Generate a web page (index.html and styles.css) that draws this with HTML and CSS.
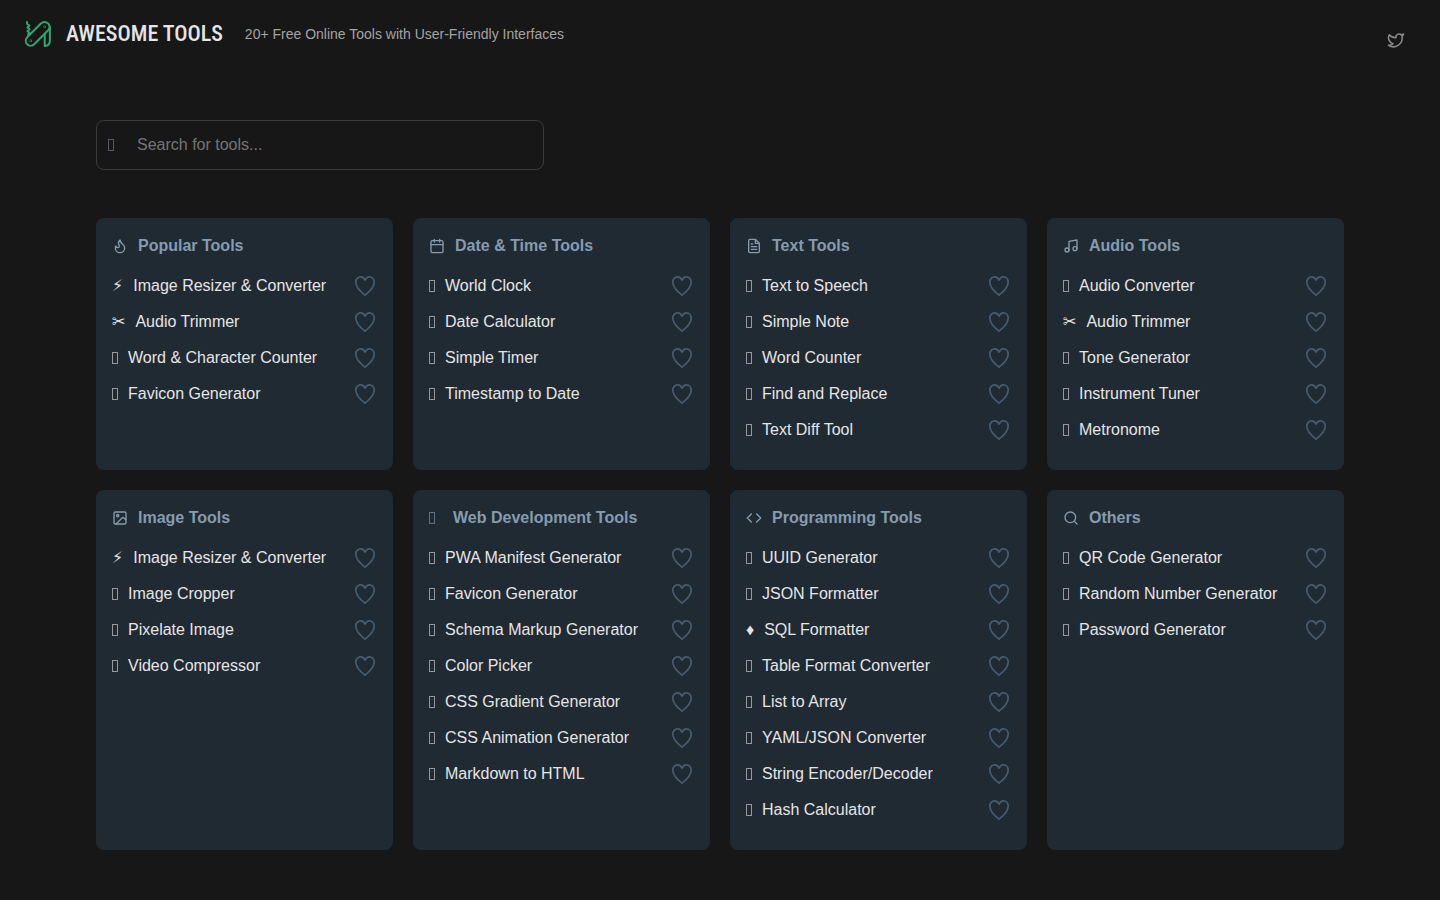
FILE: index.html
```html
<!DOCTYPE html>
<html lang="en">
<head>
    <meta charset="UTF-8">
    <meta name="viewport" content="width=device-width, initial-scale=1.0">
    <title>Awesome Tools</title>
    <link rel="stylesheet" href="styles.css">
</head>
<body>

    <!-- Shared icons -->
    <svg class="sprite" aria-hidden="true">
        <symbol id="heart" viewBox="0 0 24 24"><path d="M12 21.2C8 18 2.8 13 2.8 8.2C2.8 5 5 2.8 7.6 2.8C9.6 2.8 11.2 4.2 12 6.2C12.8 4.2 14.4 2.8 16.4 2.8C19 2.8 21.2 5 21.2 8.2C21.2 13 16 18 12 21.2Z"/></symbol>
    </svg>

    <header class="header">
        <a class="logo" href="#">
            <svg class="logo-mark" viewBox="0 0 26 26" aria-hidden="true">
                <path d="M2.2 16.2L16.2 2.2A4.9 4.9 0 0 1 23.3 2.7A4.9 4.9 0 0 1 23.2 9.2L9.2 23.2A4.9 4.9 0 0 1 2.2 16.2Z"/>
                <path d="M24.9 6V19.5C24.9 22.5 23 24.8 19.7 25.1V13.2"/>
                <path d="M2 1L2.2 3L4.4 4.6L2.4 6.4L4.6 8.2L2.4 10L4.4 11.8L3 13.6"/>
                <circle cx="5.8" cy="19.7" r=".3"/>
                <circle cx="19.7" cy="5.8" r=".3"/>
            </svg>
            <span class="logo-text">AWESOME TOOLS</span>
        </a>
        <p class="tagline">20+ Free Online Tools with User-Friendly Interfaces</p>
        <a class="twitter" href="#" aria-label="Twitter">
            <svg viewBox="0 0 24 24" aria-hidden="true"><path d="M22 4s-.7 2.1-2 3.4c1.6 10-9.4 17.3-18 11.6 2.2.1 4.4-.6 6-2C3 15.5.5 9.6 3 5c2.2 2.6 5.6 4.1 9 4-.9-4.2 4-6.6 7-3.8 1.1 0 3-1.2 3-1.2z"/></svg>
        </a>
    </header>

    <main class="content">
        <div class="search">
            <label class="search-icon" for="search-input" aria-label="Search"><span class="box"></span></label>
            <input type="text" id="search-input" class="search-input" placeholder="Search for tools...">
        </div>

        <div class="grid">
            <section class="card">
                <h2 class="card-title"><svg viewBox="0 0 24 24" aria-hidden="true"><path d="M8.5 14.5A2.5 2.5 0 0 0 11 12c0-1.38-.5-2-1-3-1.07-2.14-.22-4.05 2-6 .5 2.5 2 4.9 4 6.5 2 1.6 3 3.5 3 5.5a7 7 0 1 1-14 0c0-1.15.43-2.29 1-3a2.5 2.5 0 0 0 2.5 2.5z"/></svg>Popular Tools</h2>
                <ul class="tools">
                    <li><a href="#"><span class="symbol">⚡&#xFE0E;</span>Image Resizer &amp; Converter</a><button class="fav" aria-label="Add to favorites"><svg><use href="#heart"/></svg></button></li>
                    <li><a href="#"><span class="symbol">✂</span>Audio Trimmer</a><button class="fav" aria-label="Add to favorites"><svg><use href="#heart"/></svg></button></li>
                    <li><a href="#"><span class="box"></span>Word &amp; Character Counter</a><button class="fav" aria-label="Add to favorites"><svg><use href="#heart"/></svg></button></li>
                    <li><a href="#"><span class="box"></span>Favicon Generator</a><button class="fav" aria-label="Add to favorites"><svg><use href="#heart"/></svg></button></li>
                </ul>
            </section>

            <section class="card">
                <h2 class="card-title"><svg viewBox="0 0 24 24" aria-hidden="true"><rect x="3" y="4" width="18" height="18" rx="2"/><path d="M16 2v4M8 2v4M3 10h18"/></svg>Date &amp; Time Tools</h2>
                <ul class="tools">
                    <li><a href="#"><span class="box"></span>World Clock</a><button class="fav" aria-label="Add to favorites"><svg><use href="#heart"/></svg></button></li>
                    <li><a href="#"><span class="box"></span>Date Calculator</a><button class="fav" aria-label="Add to favorites"><svg><use href="#heart"/></svg></button></li>
                    <li><a href="#"><span class="box"></span>Simple Timer</a><button class="fav" aria-label="Add to favorites"><svg><use href="#heart"/></svg></button></li>
                    <li><a href="#"><span class="box"></span>Timestamp to Date</a><button class="fav" aria-label="Add to favorites"><svg><use href="#heart"/></svg></button></li>
                </ul>
            </section>

            <section class="card">
                <h2 class="card-title"><svg viewBox="0 0 24 24" aria-hidden="true"><path d="M14 2H6a2 2 0 0 0-2 2v16a2 2 0 0 0 2 2h12a2 2 0 0 0 2-2V8zM14 2v6h6M16 13H8M16 17H8M10 9H8"/></svg>Text Tools</h2>
                <ul class="tools">
                    <li><a href="#"><span class="box"></span>Text to Speech</a><button class="fav" aria-label="Add to favorites"><svg><use href="#heart"/></svg></button></li>
                    <li><a href="#"><span class="box"></span>Simple Note</a><button class="fav" aria-label="Add to favorites"><svg><use href="#heart"/></svg></button></li>
                    <li><a href="#"><span class="box"></span>Word Counter</a><button class="fav" aria-label="Add to favorites"><svg><use href="#heart"/></svg></button></li>
                    <li><a href="#"><span class="box"></span>Find and Replace</a><button class="fav" aria-label="Add to favorites"><svg><use href="#heart"/></svg></button></li>
                    <li><a href="#"><span class="box"></span>Text Diff Tool</a><button class="fav" aria-label="Add to favorites"><svg><use href="#heart"/></svg></button></li>
                </ul>
            </section>

            <section class="card">
                <h2 class="card-title"><svg viewBox="0 0 24 24" aria-hidden="true"><path d="M9 18V5l12-2v13"/><circle cx="6" cy="18" r="3"/><circle cx="18" cy="16" r="3"/></svg>Audio Tools</h2>
                <ul class="tools">
                    <li><a href="#"><span class="box"></span>Audio Converter</a><button class="fav" aria-label="Add to favorites"><svg><use href="#heart"/></svg></button></li>
                    <li><a href="#"><span class="symbol">✂</span>Audio Trimmer</a><button class="fav" aria-label="Add to favorites"><svg><use href="#heart"/></svg></button></li>
                    <li><a href="#"><span class="box"></span>Tone Generator</a><button class="fav" aria-label="Add to favorites"><svg><use href="#heart"/></svg></button></li>
                    <li><a href="#"><span class="box"></span>Instrument Tuner</a><button class="fav" aria-label="Add to favorites"><svg><use href="#heart"/></svg></button></li>
                    <li><a href="#"><span class="box"></span>Metronome</a><button class="fav" aria-label="Add to favorites"><svg><use href="#heart"/></svg></button></li>
                </ul>
            </section>

            <section class="card">
                <h2 class="card-title"><svg viewBox="0 0 24 24" aria-hidden="true"><rect x="3" y="3" width="18" height="18" rx="2"/><circle cx="8.5" cy="8.5" r="1.7"/><path d="M21 15l-3.1-3.1a2 2 0 0 0-2.8 0L6 21"/></svg>Image Tools</h2>
                <ul class="tools">
                    <li><a href="#"><span class="symbol">⚡&#xFE0E;</span>Image Resizer &amp; Converter</a><button class="fav" aria-label="Add to favorites"><svg><use href="#heart"/></svg></button></li>
                    <li><a href="#"><span class="box"></span>Image Cropper</a><button class="fav" aria-label="Add to favorites"><svg><use href="#heart"/></svg></button></li>
                    <li><a href="#"><span class="box"></span>Pixelate Image</a><button class="fav" aria-label="Add to favorites"><svg><use href="#heart"/></svg></button></li>
                    <li><a href="#"><span class="box"></span>Video Compressor</a><button class="fav" aria-label="Add to favorites"><svg><use href="#heart"/></svg></button></li>
                </ul>
            </section>

            <section class="card">
                <h2 class="card-title"><span class="title-icon"><span class="box"></span></span>Web Development Tools</h2>
                <ul class="tools">
                    <li><a href="#"><span class="box"></span>PWA Manifest Generator</a><button class="fav" aria-label="Add to favorites"><svg><use href="#heart"/></svg></button></li>
                    <li><a href="#"><span class="box"></span>Favicon Generator</a><button class="fav" aria-label="Add to favorites"><svg><use href="#heart"/></svg></button></li>
                    <li><a href="#"><span class="box"></span>Schema Markup Generator</a><button class="fav" aria-label="Add to favorites"><svg><use href="#heart"/></svg></button></li>
                    <li><a href="#"><span class="box"></span>Color Picker</a><button class="fav" aria-label="Add to favorites"><svg><use href="#heart"/></svg></button></li>
                    <li><a href="#"><span class="box"></span>CSS Gradient Generator</a><button class="fav" aria-label="Add to favorites"><svg><use href="#heart"/></svg></button></li>
                    <li><a href="#"><span class="box"></span>CSS Animation Generator</a><button class="fav" aria-label="Add to favorites"><svg><use href="#heart"/></svg></button></li>
                    <li><a href="#"><span class="box"></span>Markdown to HTML</a><button class="fav" aria-label="Add to favorites"><svg><use href="#heart"/></svg></button></li>
                </ul>
            </section>

            <section class="card">
                <h2 class="card-title"><svg viewBox="0 0 24 24" aria-hidden="true"><path d="M16 18l6-6-6-6M8 6l-6 6 6 6"/></svg>Programming Tools</h2>
                <ul class="tools">
                    <li><a href="#"><span class="box"></span>UUID Generator</a><button class="fav" aria-label="Add to favorites"><svg><use href="#heart"/></svg></button></li>
                    <li><a href="#"><span class="box"></span>JSON Formatter</a><button class="fav" aria-label="Add to favorites"><svg><use href="#heart"/></svg></button></li>
                    <li><a href="#"><span>♦</span>SQL Formatter</a><button class="fav" aria-label="Add to favorites"><svg><use href="#heart"/></svg></button></li>
                    <li><a href="#"><span class="box"></span>Table Format Converter</a><button class="fav" aria-label="Add to favorites"><svg><use href="#heart"/></svg></button></li>
                    <li><a href="#"><span class="box"></span>List to Array</a><button class="fav" aria-label="Add to favorites"><svg><use href="#heart"/></svg></button></li>
                    <li><a href="#"><span class="box"></span>YAML/JSON Converter</a><button class="fav" aria-label="Add to favorites"><svg><use href="#heart"/></svg></button></li>
                    <li><a href="#"><span class="box"></span>String Encoder/Decoder</a><button class="fav" aria-label="Add to favorites"><svg><use href="#heart"/></svg></button></li>
                    <li><a href="#"><span class="box"></span>Hash Calculator</a><button class="fav" aria-label="Add to favorites"><svg><use href="#heart"/></svg></button></li>
                </ul>
            </section>

            <section class="card">
                <h2 class="card-title"><svg viewBox="0 0 24 24" aria-hidden="true"><circle cx="11" cy="11" r="8"/><path d="M21 21l-4.3-4.3"/></svg>Others</h2>
                <ul class="tools">
                    <li><a href="#"><span class="box"></span>QR Code Generator</a><button class="fav" aria-label="Add to favorites"><svg><use href="#heart"/></svg></button></li>
                    <li><a href="#"><span class="box"></span>Random Number Generator</a><button class="fav" aria-label="Add to favorites"><svg><use href="#heart"/></svg></button></li>
                    <li><a href="#"><span class="box"></span>Password Generator</a><button class="fav" aria-label="Add to favorites"><svg><use href="#heart"/></svg></button></li>
                </ul>
            </section>
        </div>
    </main>

</body>
</html>
```
FILE: styles.css
```css
* {
    box-sizing: border-box;
}

body {
    font-family: "Liberation Sans", Arial, sans-serif;
    font-size: 16px;
    line-height: 24px;
    background-color: #171717;
    color: #e5e5e5;
    margin: 0;
}

a {
    color: inherit;
    text-decoration: none;
}

svg {
    fill: none;
    stroke: currentColor;
    stroke-width: 2;
    stroke-linecap: round;
    stroke-linejoin: round;
    flex-shrink: 0;
}

.sprite {
    display: none;
}

/* Header */
.header {
    display: flex;
    align-items: center;
    gap: 22px;
    padding: 16px 35px 16px 25px;
}

.logo {
    display: flex;
    align-items: center;
    gap: 15px;
    height: 36px;
}

.logo-mark {
    width: 26px;
    height: 26px;
    color: #2fa572;
    overflow: visible;
}

.logo-text {
    font-family: "Roboto Condensed", "Liberation Sans Narrow", "Liberation Sans", sans-serif;
    font-size: 22px;
    font-weight: 500;
    white-space: nowrap;
}

.tagline {
    margin: 0;
    font-size: 14px;
    line-height: 20px;
    color: #a3a3a3;
}

.twitter {
    display: flex;
    align-self: flex-end;
    margin-left: auto;
    padding-bottom: 3px;
    color: #8a8a8a;
}

.twitter svg {
    width: 18px;
    height: 18px;
}

/* Small outlined box used as a plain icon */
.box {
    flex-shrink: 0;
    width: 6px;
    height: 12px;
    border: 1px solid currentColor;
    opacity: 0.6;
}

.symbol {
    font-family: "DejaVu Sans", sans-serif;
}

/* Search */
.content {
    padding: 52px 96px 46px;
}

.search {
    position: relative;
    max-width: 448px;
    margin-bottom: 48px;
}

.search-icon {
    display: flex;
    align-items: center;
    position: absolute;
    left: 12px;
    top: 0;
    bottom: 0;
    color: #7b8494;
}

.search-input {
    display: block;
    width: 100%;
    height: 50px;
    padding: 0 16px 0 40px;
    border: 1px solid #3a3a3a;
    border-radius: 8px;
    background-color: transparent;
    color: #e5e5e5;
    font: inherit;
}

.search-input::placeholder {
    color: #757575;
}

/* Tool cards */
.grid {
    display: grid;
    grid-template-columns: repeat(4, 1fr);
    gap: 20px;
}

.card {
    padding: 16px 16px 22px;
    border-radius: 8px;
    background-color: #202a33;
}

.card-title {
    display: flex;
    align-items: center;
    gap: 10px;
    margin: 0 0 10px;
    font-size: 16px;
    color: #859cb0;
}

.card-title svg {
    width: 16px;
    height: 16px;
}

.title-icon {
    display: flex;
    padding-right: 8px;
}

.tools {
    list-style: none;
    margin: 0;
    padding: 0;
}

.tools li {
    display: flex;
    align-items: center;
    justify-content: space-between;
    height: 36px;
}

.tools a {
    display: flex;
    align-items: center;
    gap: 10px;
    height: 24px;
    white-space: nowrap;
}

.tools a:hover {
    color: #859cb0;
}

.fav {
    display: flex;
    padding: 0;
    border: none;
    background: none;
    color: #475c70;
    cursor: pointer;
}

.fav svg {
    width: 24px;
    height: 24px;
    stroke-width: 1.7;
}

@media (max-width: 1100px) {
    .grid {
        grid-template-columns: repeat(2, 1fr);
    }
}
```
